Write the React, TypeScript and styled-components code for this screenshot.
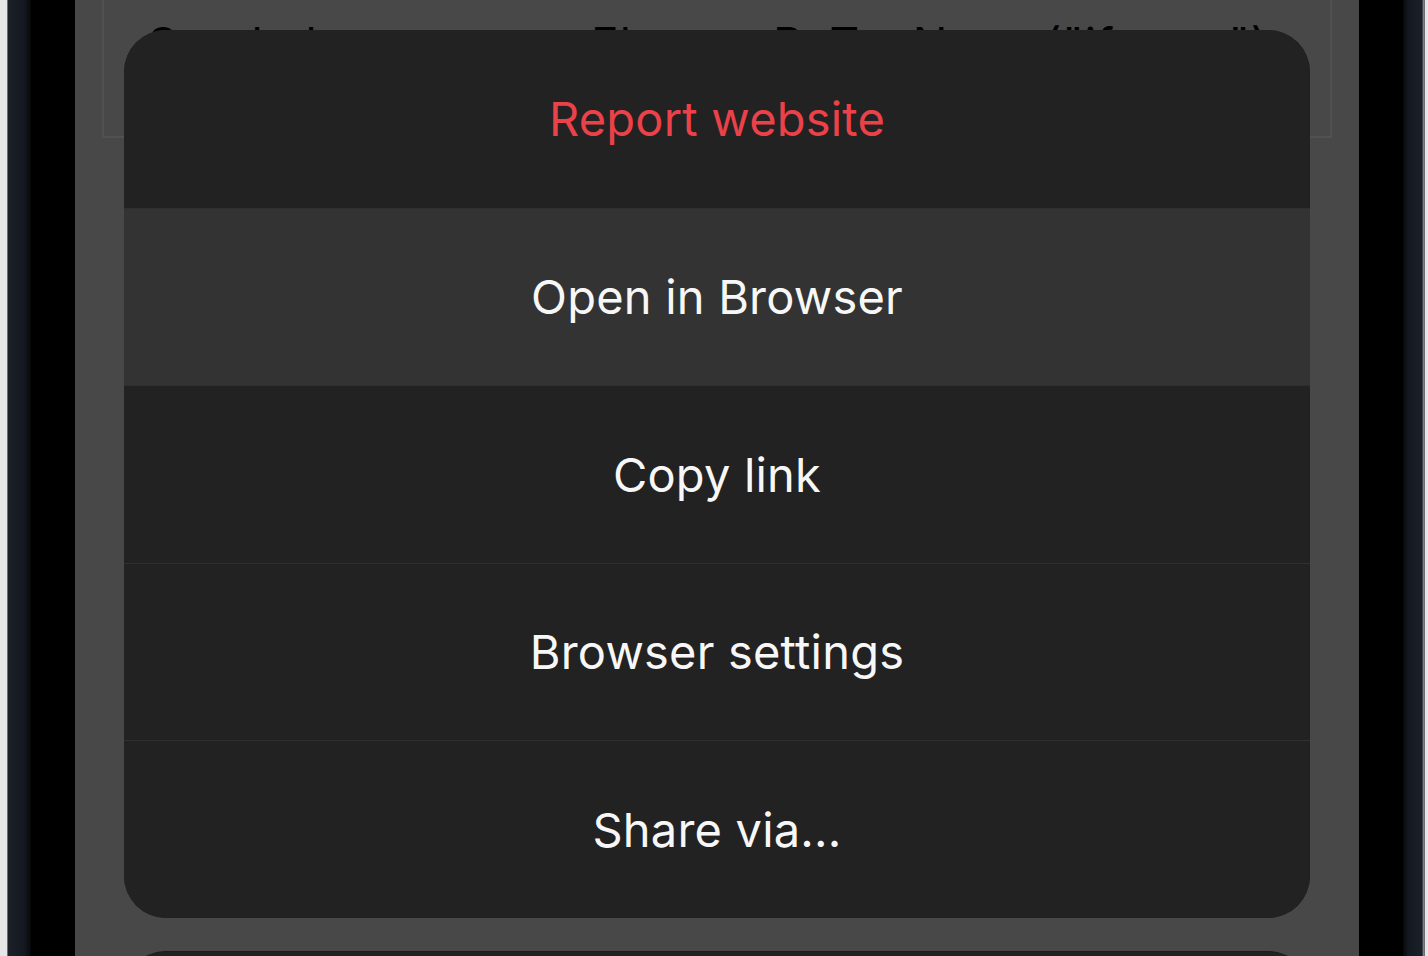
import styled, { createGlobalStyle } from 'styled-components';

const GlobalStyle = createGlobalStyle`
  html, body {
    margin: 0;
    padding: 0;
    background: #e8e8e8;
    overflow: hidden;
  }
  * {
    box-sizing: border-box;
  }
`;

const Device = styled.div`
  display: flex;
  height: 956px;
  width: 1428px;
  background: #e8e8e8;
`;

const Edge = styled.div<{ $side: 'left' | 'right' }>`
  width: ${({ $side }) => ($side === 'left' ? '8px' : '4px')};
  background: #e6e6e6;
  border-${({ $side }) => ($side === 'left' ? 'right' : 'left')}: 1px solid #6a6d72;
  flex: none;
`;

const Rim = styled.div<{ $side: 'left' | 'right' }>`
  width: ${({ $side }) => ($side === 'left' ? '23px' : '21px')};
  flex: none;
  background: ${({ $side }) =>
    $side === 'left'
      ? 'linear-gradient(90deg, #1b2029 0%, #141921 70%, #07080a 100%)'
      : 'linear-gradient(90deg, #07080a 0%, #141921 25%, #1b2029 90%, #9a9ea4 100%)'};
`;

const Bezel = styled.div<{ $w: number }>`
  width: ${({ $w }) => $w}px;
  flex: none;
  background: #000;
`;

const Screen = styled.div`
  position: relative;
  flex: 1;
  background: #484848;
  overflow: hidden;
`;

const PageContent = styled.div`
  padding: 0 27px;
`;

const CodeCard = styled.div`
  height: 138px;
  border: 2px solid #515151;
  border-top: none;
  padding: 16px 0 0 44px;
  font-family: 'Inter', 'Liberation Sans', sans-serif;
  font-size: 46px;
  letter-spacing: 1px;
  color: #000;
  white-space: nowrap;
`;

const Overlay = styled.div`
  position: absolute;
  top: 30px;
  left: 49px;
  right: 49px;
  display: flex;
  flex-direction: column;
  gap: 33px;
`;

const Sheet = styled.div`
  flex: none;
  background: #222222;
  border-radius: 42px;
  overflow: hidden;
  display: flex;
  flex-direction: column;
`;

const SheetRow = styled.div<{ $active?: boolean; $danger?: boolean }>`
  flex: none;
  height: 177.5px;
  display: flex;
  align-items: center;
  justify-content: center;
  background: ${({ $active }) => ($active ? '#333333' : '#222222')};
  color: ${({ $danger }) => ($danger ? '#eb4149' : '#f7f7f7')};
  font-family: 'Inter', 'Liberation Sans', sans-serif;
  font-size: 47px;
  letter-spacing: 0.2px;
  & + & {
    border-top: 1px solid #2f2f2f;
  }
`;

const CancelButton = styled.div`
  flex: none;
  height: 120px;
  background: #222222;
  border-radius: 42px;
  border-top: 1px solid #1c1c1c;
`;

const actions = [
  { label: 'Report website', danger: true },
  { label: 'Open in Browser', active: true },
  { label: 'Copy link' },
  { label: 'Browser settings' },
  { label: 'Share via...' },
];

function App() {
  return (
    <>
      <GlobalStyle />
      <Device>
        <Edge $side="left" />
        <Rim $side="left" />
        <Bezel $w={44} />
        <Screen>
          <PageContent>
            <CodeCard>Send element = getElementByTagName("iframe")</CodeCard>
          </PageContent>
          <Overlay>
            <Sheet>
              {actions.map((a) => (
                <SheetRow key={a.label} $active={a.active} $danger={a.danger}>
                  {a.label}
                </SheetRow>
              ))}
            </Sheet>
            <CancelButton />
          </Overlay>
        </Screen>
        <Bezel $w={44} />
        <Rim $side="right" />
        <Edge $side="right" />
      </Device>
    </>
  );
}

export default App;
